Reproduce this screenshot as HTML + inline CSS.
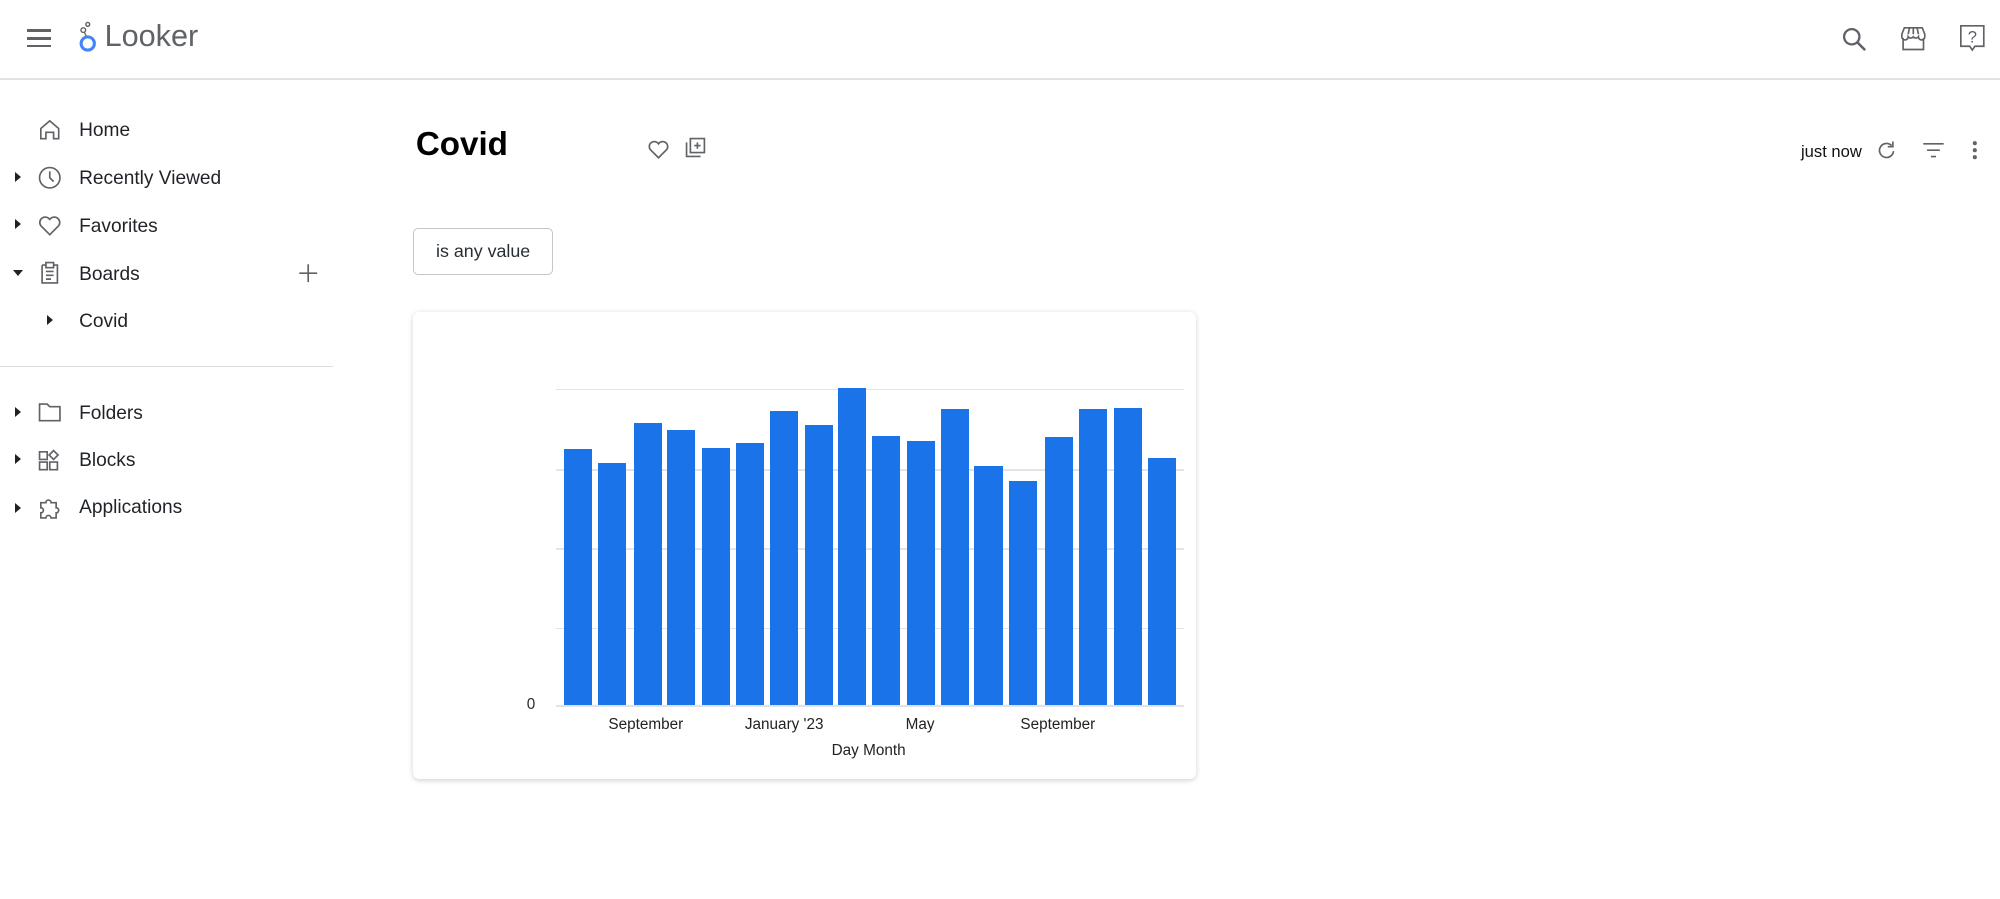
<!DOCTYPE html>
<html><head><meta charset="utf-8"><style>
html,body{margin:0;padding:0;background:#fff;overflow:hidden}
body{width:2000px;height:899px}
#w{position:relative;width:1568px;height:705px;zoom:1.2755;font-family:"Liberation Sans",Arial,sans-serif;color:#262d33}
.a{position:absolute}
.nav{font-size:15px;color:#1f2328}
svg.i{position:absolute;fill:none;stroke:#5f6368;stroke-width:1.3}
.tri{position:absolute;width:0;height:0;border-top:4px solid transparent;border-bottom:4px solid transparent;border-left:5px solid #202124}
.bar{position:absolute;background:#1a73e8;width:22px}
.g{position:absolute;left:436px;width:492px;height:1px;background:#e4e4e4}
.xl{position:absolute;top:561px;font-size:12px;color:#222}
</style></head><body><div id="w">
<!-- header -->
<div class="a" style="left:0;top:61px;width:1568px;height:2px;background:#e2e2e2"></div>
<div class="a" style="left:21px;top:23px;width:19px;height:2px;background:#5f6368"></div>
<div class="a" style="left:21px;top:29px;width:19px;height:2px;background:#5f6368"></div>
<div class="a" style="left:21px;top:35px;width:19px;height:2px;background:#5f6368"></div>
<svg class="a" style="left:59px;top:14px" width="22" height="28"><circle cx="10" cy="20" r="5.2" fill="none" stroke="#4285f4" stroke-width="2.4"/><circle cx="6.5" cy="9.5" r="1.8" fill="none" stroke="#5f6368" stroke-width="1.1"/><circle cx="10" cy="5" r="1.5" fill="none" stroke="#5f6368" stroke-width="1.1"/><path d="M7.5 11.5l1.5 3" stroke="#5f6368" stroke-width="1"/></svg>
<div class="a" style="left:82px;top:15px;font-size:24px;color:#5f6368">Looker</div>
<svg class="i" style="left:1442px;top:19px" width="24" height="24"><circle cx="10" cy="10" r="6" stroke-width="1.8"/><path d="M14.5 14.5l6 6" stroke-width="2"/></svg>
<svg class="i" style="left:1488px;top:19px" width="24" height="24" stroke-width="1.7"><path d="M3 8l2-5h14l2 5v2a2.5 2.5 0 01-5 0 2.5 2.5 0 01-4 0 2.5 2.5 0 01-4 0 2.5 2.5 0 01-5 0zM4 11v9h16v-9M9 3l-1 5M15 3l1 5M12 3v5"/></svg>
<svg class="i" style="left:1534px;top:17px" width="24" height="26" stroke-width="1.7"><path d="M3 3h18v16h-7l-2 3-2-3H3z"/><text x="12" y="16" font-size="13" text-anchor="middle" fill="#5f6368" stroke="none" font-family="Liberation Sans">?</text></svg>
<!-- sidebar -->
<svg class="i" style="left:29px;top:92px" width="20" height="20"><path d="M3 9l7-6 7 6v8h-4v-5H7v5H3z"/></svg>
<div class="a nav" style="left:62px;top:94px">Home</div>
<div class="tri" style="left:12px;top:135px"></div>
<svg class="i" style="left:29px;top:129px" width="20" height="20"><circle cx="10" cy="10" r="8"/><path d="M10 5v5l3 3"/></svg>
<div class="a nav" style="left:62px;top:132px">Recently Viewed</div>
<div class="tri" style="left:12px;top:172px"></div>
<svg class="i" style="left:29px;top:167px" width="20" height="20"><path d="M10 17L3 10a4 4 0 017-5 4 4 0 017 5z"/></svg>
<div class="a nav" style="left:62px;top:169px">Favorites</div>
<div class="a" style="left:10px;top:212px;width:0;height:0;border-left:4px solid transparent;border-right:4px solid transparent;border-top:5px solid #202124"></div>
<svg class="i" style="left:29px;top:204px" width="20" height="20"><path d="M4 4h3M13 4h3v14H4V4M7 2h6v4H7zM7 9h6M7 12h6M7 15h4"/></svg>
<div class="a nav" style="left:62px;top:207px">Boards</div>
<svg class="i" style="left:234px;top:206px" width="16" height="16" stroke="#9aa0a6"><path d="M8 1v14M1 8h14"/></svg>
<div class="tri" style="left:37px;top:247px"></div>
<div class="a nav" style="left:62px;top:244px">Covid</div>
<div class="a" style="left:0;top:287px;width:261px;height:1px;background:#dadce0"></div>
<div class="tri" style="left:12px;top:319px"></div>
<svg class="i" style="left:29px;top:313px" width="20" height="20"><path d="M2 4h6l2 2h8v11H2z"/></svg>
<div class="a nav" style="left:62px;top:316px">Folders</div>
<div class="tri" style="left:12px;top:356px"></div>
<svg class="i" style="left:29px;top:351px" width="20" height="20"><path d="M2 3h6v6H2zM2 11h6v6H2zM10 11h6v6h-6zM13 2l3.5 3.5L13 9 9.5 5.5z"/></svg>
<div class="a nav" style="left:62px;top:353px">Blocks</div>
<div class="tri" style="left:12px;top:394px"></div>
<svg class="i" style="left:29px;top:388px" width="20" height="20"><path d="M3 6h4a2 2 0 014 0h4v4a2 2 0 010 4v4h-4a2 2 0 00-4 0H3v-4a2 2 0 000-4z"/></svg>
<div class="a nav" style="left:62px;top:390px">Applications</div>
<!-- title row -->
<div class="a" style="left:326px;top:99px;font-size:26px;font-weight:bold;color:#000">Covid</div>
<svg class="i" style="left:507px;top:108px" width="18" height="18"><path d="M9 15.5L2.5 9a3.6 3.6 0 016.5-4.5A3.6 3.6 0 0115.5 9z"/></svg>
<svg class="i" style="left:536px;top:107px" width="18" height="18"><path d="M5 2h11v11H5zM2 5v11h11M10.5 5v5M8 7.5h5"/></svg>
<div class="a" style="left:1412px;top:111px;font-size:13px;color:#111">just now</div>
<svg class="i" style="left:1470px;top:109px" width="18" height="18" stroke-width="1.6"><path d="M14.5 9.5A5.5 5.5 0 1113 5.2"/><path d="M14 2v4h-4" fill="none"/></svg>
<svg class="i" style="left:1507px;top:110px" width="18" height="16" stroke-width="1.5"><path d="M1 3h16M4 8h10M7 13h4"/></svg>
<svg class="a" style="left:1545px;top:110px" width="6" height="16"><circle cx="3" cy="2.5" r="1.6" fill="#5f6368"/><circle cx="3" cy="8" r="1.6" fill="#5f6368"/><circle cx="3" cy="13.5" r="1.6" fill="#5f6368"/></svg>
<!-- filter -->
<div class="a" style="left:324px;top:179px;width:108px;height:35px;border:1px solid #c4c7c5;border-radius:4px;font-size:14px;line-height:35px;text-align:center;color:#262d33">is any value</div>
<!-- card -->
<div class="a" style="left:324px;top:245px;width:614px;height:366px;border-radius:5px;box-shadow:0 1px 4px rgba(0,0,0,0.18);background:#fff"></div>
<div class="g" style="top:305px"></div><div class="g" style="top:368px"></div><div class="g" style="top:430px"></div><div class="g" style="top:492px"></div>
<div class="g" style="top:553px;background:#dfe3e8"></div>
<div class="bar" style="left:442px;top:352px;height:201px"></div>
<div class="bar" style="left:469px;top:363px;height:190px"></div>
<div class="bar" style="left:497px;top:332px;height:221px"></div>
<div class="bar" style="left:523px;top:337px;height:216px"></div>
<div class="bar" style="left:550px;top:351px;height:202px"></div>
<div class="bar" style="left:577px;top:347px;height:206px"></div>
<div class="bar" style="left:604px;top:322px;height:231px"></div>
<div class="bar" style="left:631px;top:333px;height:220px"></div>
<div class="bar" style="left:657px;top:304px;height:249px"></div>
<div class="bar" style="left:684px;top:342px;height:211px"></div>
<div class="bar" style="left:711px;top:346px;height:207px"></div>
<div class="bar" style="left:738px;top:321px;height:232px"></div>
<div class="bar" style="left:764px;top:365px;height:188px"></div>
<div class="bar" style="left:791px;top:377px;height:176px"></div>
<div class="bar" style="left:819px;top:343px;height:210px"></div>
<div class="bar" style="left:846px;top:321px;height:232px"></div>
<div class="bar" style="left:873px;top:320px;height:233px"></div>
<div class="bar" style="left:900px;top:359px;height:194px"></div>
<div class="a" style="left:413px;top:546px;font-size:12px">0</div>
<div class="xl" style="left:477px">September</div>
<div class="xl" style="left:584px">January '23</div>
<div class="xl" style="left:710px">May</div>
<div class="xl" style="left:800px">September</div>
<div class="xl" style="left:652px;top:582px">Day Month</div>
</div></body></html>
